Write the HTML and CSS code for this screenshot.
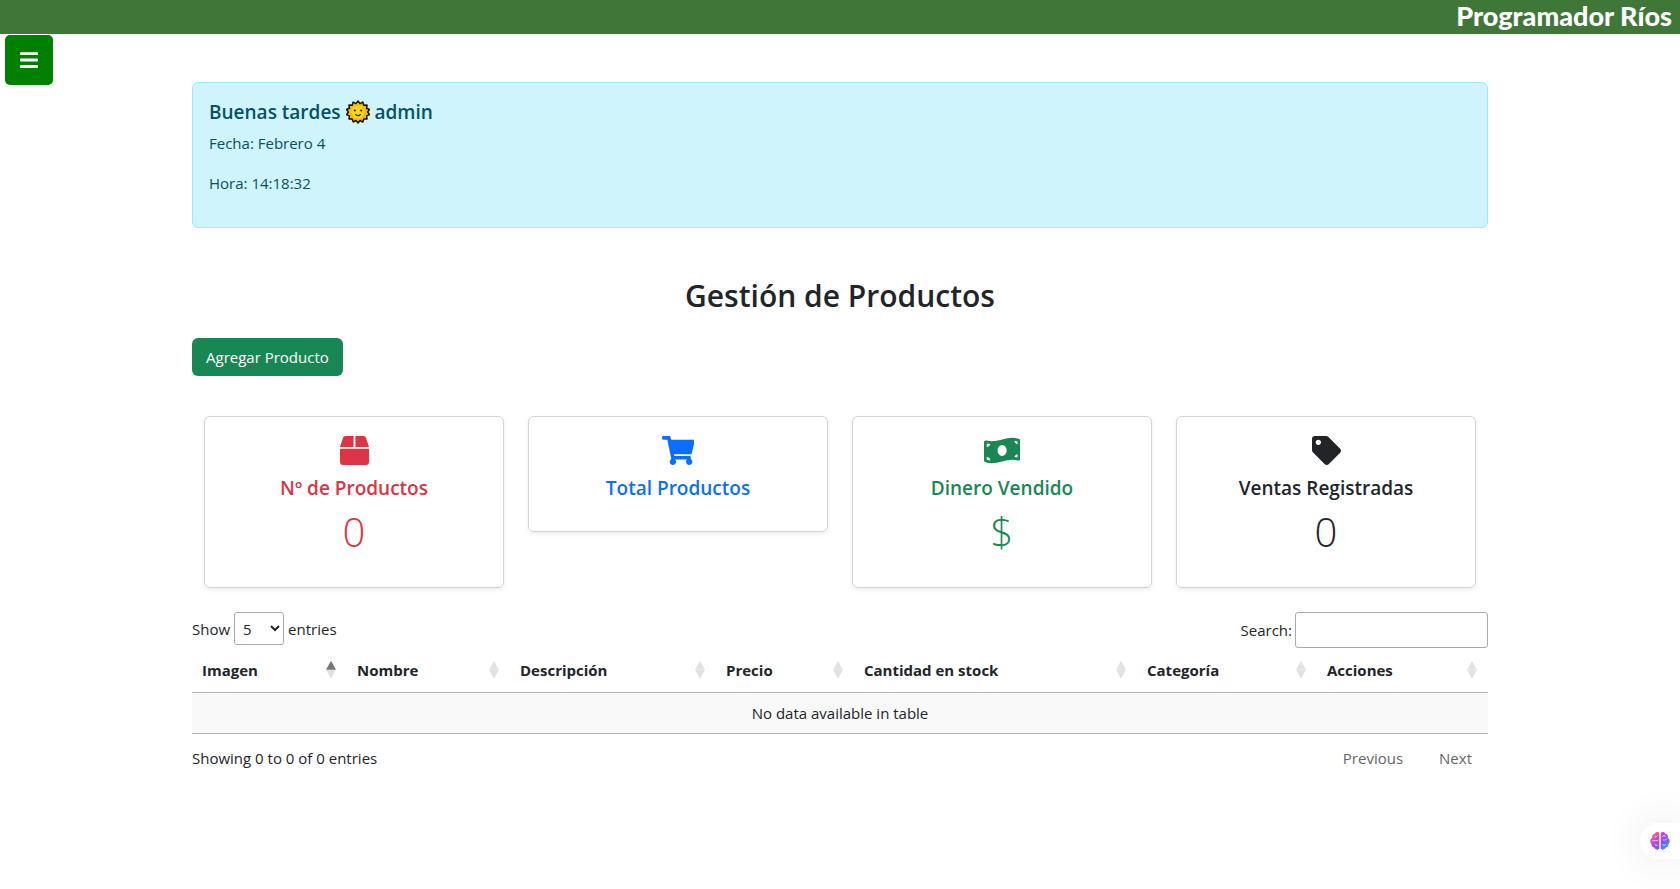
FILE: index.html
```html
<!DOCTYPE html>
<html lang="es">
<head>
<meta charset="utf-8">
<title>Gestión de Productos</title>
<link rel="stylesheet" href="styles.css">
</head>
<body>
<header class="topbar"><span class="brand">Programador Ríos</span></header>
<button class="menu-toggle" type="button" aria-label="Menú">
  <svg width="18" height="22" viewBox="0 0 448 512" fill="currentColor"><path d="M16 132h416c8.837 0 16-7.163 16-16V76c0-8.837-7.163-16-16-16H16C7.163 60 0 67.163 0 76v40c0 8.837 7.163 16 16 16zm0 160h416c8.837 0 16-7.163 16-16v-40c0-8.837-7.163-16-16-16H16c-8.837 0-16 7.163-16 16v40c0 8.837 7.163 16 16 16zm0 160h416c8.837 0 16-7.163 16-16v-40c0-8.837-7.163-16-16-16H16c-8.837 0-16 7.163-16 16v40c0 8.837 7.163 16 16 16z"/></svg>
</button>
<main class="container">
  <section class="greeting">
    <h2 class="greeting-title">Buenas tardes
      <svg class="sun" width="24" height="24" viewBox="0 0 24 24"><path d="M12 1l2 2.600 2.800-1.500 1 3.100 3.200-.1-.4 3.100 2.900 1.300-1.800 2.500 1.800 2.600-2.900 1.300.4 3.100-3.200-.1-1 3.100-2.800-1.500-2 2.500-2-2.500-2.800 1.500-1-3.100-3.200.1.4-3.100-2.900-1.300 1.800-2.600-1.800-2.500 2.900-1.300-.4-3.100 3.200.1 1-3.100 2.800 1.500z" fill="#ffb900" stroke="#111" stroke-width="1.500" stroke-linejoin="round"/><circle cx="12" cy="12" r="6.500" fill="#ffd90a"/><circle cx="8.800" cy="10.500" r="1.100" fill="#222"/><circle cx="15.200" cy="10.500" r="1.100" fill="#222"/><path d="M9.500 14.500q2.500 2.200 5 0" fill="none" stroke="#222" stroke-width="1.100" stroke-linecap="round"/></svg>
      admin</h2>
    <p class="line">Fecha: Febrero 4</p>
    <p class="line">Hora: 14:18:32</p>
  </section>
  <h1 class="title">Gestión de Productos</h1>
  <button class="btn-add" type="button">Agregar Producto</button>
  <section class="cards">
    <article class="card red">
      <svg class="icon" viewBox="0 0 512 512" fill="currentColor"><path d="M509.500 184.600L458.900 32.800C452.400 13.200 434.100 0 413.400 0H272v192h238.700c-.4-2.500-.4-5-1.200-7.400zM240 0H98.600c-20.700 0-39 13.200-45.500 32.800L2.500 184.600c-.8 2.400-.8 4.900-1.200 7.400H240V0zM0 224v240c0 26.500 21.500 48 48 48h416c26.500 0 48-21.500 48-48V224H0z"/></svg>
      <h3 class="card-title">Nº de Productos</h3><p class="value">0</p>
    </article>
    <article class="card blue">
      <svg class="icon" viewBox="0 0 576 512" fill="currentColor"><path d="M528.120 301.319l47.273-208C578.806 78.301 567.391 64 552 64H159.208l-9.166-44.810C147.758 8.021 137.930 0 126.529 0H24C10.745 0 0 10.745 0 24v16c0 13.255 10.745 24 24 24h69.883l70.248 343.435C147.325 417.100 136 435.222 136 456c0 30.928 25.072 56 56 56s56-25.072 56-56c0-15.674-6.447-29.835-16.824-40h209.647C430.447 426.165 424 440.326 424 456c0 30.928 25.072 56 56 56s56-25.072 56-56c0-22.172-12.888-41.332-31.579-50.405l5.517-24.276c3.413-15.018-8.002-29.319-23.393-29.319H218.117l-6.545-32h293.145c11.206 0 20.920-7.754 23.403-18.681z"/></svg>
      <h3 class="card-title">Total Productos</h3><p class="value"></p>
    </article>
    <article class="card green">
      <svg class="icon" viewBox="0 0 640 512" fill="currentColor"><path d="M621.160 54.460C582.370 38.190 543.550 32 504.750 32c-123.170-.01-246.330 62.340-369.500 62.340-30.890 0-61.760-3.920-92.650-13.720-3.470-1.100-6.950-1.620-10.350-1.620C15.040 79 0 92.320 0 110.810v317.260c0 12.630 7.230 24.600 18.840 29.460C57.630 473.810 96.450 480 135.250 480c123.170 0 246.340-62.350 369.510-62.350 30.890 0 61.760 3.920 92.650 13.720 3.470 1.100 6.950 1.620 10.350 1.620 17.210 0 32.250-13.320 32.250-31.810V83.930c-.01-12.640-7.240-24.600-18.850-29.470zM48 132.220c20.120 5.040 41.120 7.570 62.720 8.930C104.840 170.540 79 192.690 48 192.690v-60.470zm0 285v-47.780c34.370 0 62.180 27.270 63.710 61.400-22.530-1.810-43.590-6.310-63.710-13.620zM320 352c-44.190 0-80-42.990-80-96 0-53.020 35.820-96 80-96s80 42.980 80 96c0 53.030-35.830 96-80 96zm272 27.780c-17.520-4.390-35.710-6.850-54.320-8.440 5.870-26.080 27.500-45.880 54.320-49.280v57.720zm0-236.110c-30.890-3.910-54.860-29.700-55.810-61.550 19.540 2.170 38.090 6.230 55.810 13.660v47.890z"/></svg>
      <h3 class="card-title">Dinero Vendido</h3><p class="value">$</p>
    </article>
    <article class="card dark">
      <svg class="icon" viewBox="0 0 512 512" fill="currentColor"><path d="M0 252.118V48C0 21.490 21.490 0 48 0h204.118a48 48 0 0 1 33.941 14.059l211.882 211.882c18.745 18.745 18.745 49.137 0 67.882L293.823 497.941c-18.745 18.745-49.137 18.745-67.882 0L14.059 286.059A48 48 0 0 1 0 252.118zM112 64c-26.510 0-48 21.490-48 48s21.490 48 48 48 48-21.490 48-48-21.490-48-48-48z"/></svg>
      <h3 class="card-title">Ventas Registradas</h3><p class="value">0</p>
    </article>
  </section>
  <div class="controls">
    <label class="length">Show <select class="select"><option>5</option><option>10</option></select> entries</label>
    <label class="filter">Search:<input class="search" type="search"></label>
  </div>
  <table class="products">
    <colgroup><col class="c1"><col class="c2"><col class="c3"><col class="c4"><col class="c5"><col class="c6"><col class="c7"></colgroup>
    <thead><tr>
      <th class="sorted"><div class="head">Imagen<span class="sort"></span></div></th>
      <th><div class="head">Nombre<span class="sort"></span></div></th>
      <th><div class="head">Descripción<span class="sort"></span></div></th>
      <th><div class="head">Precio<span class="sort"></span></div></th>
      <th><div class="head">Cantidad en stock<span class="sort"></span></div></th>
      <th><div class="head">Categoría<span class="sort"></span></div></th>
      <th><div class="head">Acciones<span class="sort"></span></div></th>
    </tr></thead>
    <tbody><tr><td colspan="7">No data available in table</td></tr></tbody>
  </table>
  <footer class="table-footer">
    <span>Showing 0 to 0 of 0 entries</span>
    <nav class="pager"><button class="page" type="button">Previous</button><button class="page" type="button">Next</button></nav>
  </footer>
</main>
<button class="assistant" type="button" aria-label="Asistente">
  <svg width="20" height="20" viewBox="0 0 20 20"><defs><linearGradient id="g" x1="0" y1="0" x2="1" y2="1"><stop offset="0" stop-color="#ff9a1f"/><stop offset=".3" stop-color="#e83fc4"/><stop offset=".6" stop-color="#7a55f5"/><stop offset="1" stop-color="#25b4ff"/></linearGradient></defs><path d="M9.300 2.500C8.500.4 5.200.6 4.700 2.800 2.500 3 1.600 5.200 2.300 6.700-.2 8-.3 11.300 1.500 12.700c-.3 2.100 1.100 3.700 2.800 3.900 1 2.600 4.300 2.900 5 .7zM10.700 2.500c.8-2.100 4.100-1.900 4.600.3 2.200.2 3.100 2.400 2.400 3.900 2.500 1.300 2.600 4.600.8 6 .3 2.100-1.100 3.700-2.800 3.900-1 2.600-4.300 2.900-5 .7z" fill="url(#g)"/><path d="M4.500 6q2 .2 3-1.500M2 9.700h6M4.500 13.200q1.300 1.700 3.200 1M12.500 6l1.500-2 1.500 2M13 9h2.500l1.500-1.500M12.500 13l1.500 1.800 1.800-1.800" fill="none" stroke="#fff" stroke-opacity=".75" stroke-width="1"/></svg>
</button>
</body>
</html>
```
FILE: styles.css
```css
* { box-sizing: border-box; }
body { margin: 0; background: #fff; color: #212529; font: 15px/24px "Open Sans", "Noto Sans", sans-serif; }
button, input, select { font: inherit; color: inherit; }
h1, h2, h3, p { margin: 0; }
.topbar { height: 34px; padding: 0 8px; display: flex; justify-content: flex-end; background: #3f7739; }
.brand { color: #fff; font: 900 27px/32px Lato, sans-serif; }
.menu-toggle { position: absolute; top: 35px; left: 5px; width: 48px; height: 50px; padding: 0; border: 0; border-radius: 5px; background: #008000; color: #fff; display: grid; place-items: center; }
.container { max-width: 1320px; margin: 48px auto 0; padding: 0 12px; }
.greeting { padding: 17px 16px 16px; border: 1px solid #9eeaf9; border-radius: 6px; background: #cff4fc; color: #055160; }
.greeting-title { margin-bottom: 7px; font-size: 19px; line-height: 24px; font-weight: 600; }
.sun { vertical-align: -5px; }
.line { margin-bottom: 16px; }
.title { margin: 48px 0 22px; text-align: center; font-size: 30px; line-height: 40px; font-weight: 600; }
.btn-add { display: block; height: 38px; padding: 0 14px; border: 0; border-radius: 6px; background: #198754; color: #fff; }
.cards { display: grid; grid-template-columns: repeat(4, 1fr); align-items: start; gap: 24px; margin: 40px 12px 24px; }
.card { padding: 19px 16px 31px; border: 1px solid #d3d4d5; border-radius: 6px; box-shadow: 0 2px 4px rgba(0, 0, 0, .08); text-align: center; }
.icon { display: block; height: 29px; margin: 0 auto 11px; }
.card-title { font-size: 19px; line-height: 24px; font-weight: 600; }
.value { margin-top: 8px; font-size: 40px; line-height: 48px; font-weight: 300; }
.value:empty { display: none; }
.red { color: #dc3545; }
.blue { color: #0d6efd; }
.green { color: #198754; }
.controls { display: flex; justify-content: space-between; align-items: flex-start; }
.length, .filter { display: flex; align-items: center; }
.length { gap: 4px; }
.filter { gap: 3px; }
.select { width: 50px; height: 33px; padding: 0 4px; border: 1px solid #aaa; border-radius: 3px; background: transparent; }
.search { width: 193px; height: 36px; border: 1px solid #aaa; border-radius: 3px; background: transparent; }
.products { width: 100%; table-layout: fixed; border-collapse: collapse; }
.c1 { width: 155px; }
.c2 { width: 163px; }
.c3 { width: 206px; }
.c4 { width: 138px; }
.c5 { width: 283px; }
.c6 { width: 180px; }
.c7 { width: 171px; }
th { height: 44px; padding: 0 11px 0 10px; text-align: left; font-weight: 700; }
.head { display: flex; justify-content: space-between; align-items: center; }
.sort { display: grid; }
.sort::before, .sort::after { content: ""; width: 10px; height: 9px; background: #e1e3e3; }
.sort::before { clip-path: polygon(50% 0, 100% 100%, 0 100%); }
.sort::after { clip-path: polygon(0 0, 100% 0, 50% 100%); }
.sorted .sort::before { background: #74777a; }
td { height: 41px; border: solid #b3b3b3; border-width: 1px 0; background: #f9f9f9; text-align: center; }
.table-footer { display: flex; justify-content: space-between; padding-top: 12px; }
.pager { display: flex; gap: 4px; }
.page { border: 0; background: none; padding: 0 16px; color: #666; }
.assistant { position: fixed; right: 0; bottom: 30px; width: 40px; height: 36px; border: 0; border-radius: 18px 0 0 18px; background: #fff; padding: 0 0 0 10px; display: flex; align-items: center; box-shadow: 0 0 40px rgba(0, 0, 0, .1); }
```
